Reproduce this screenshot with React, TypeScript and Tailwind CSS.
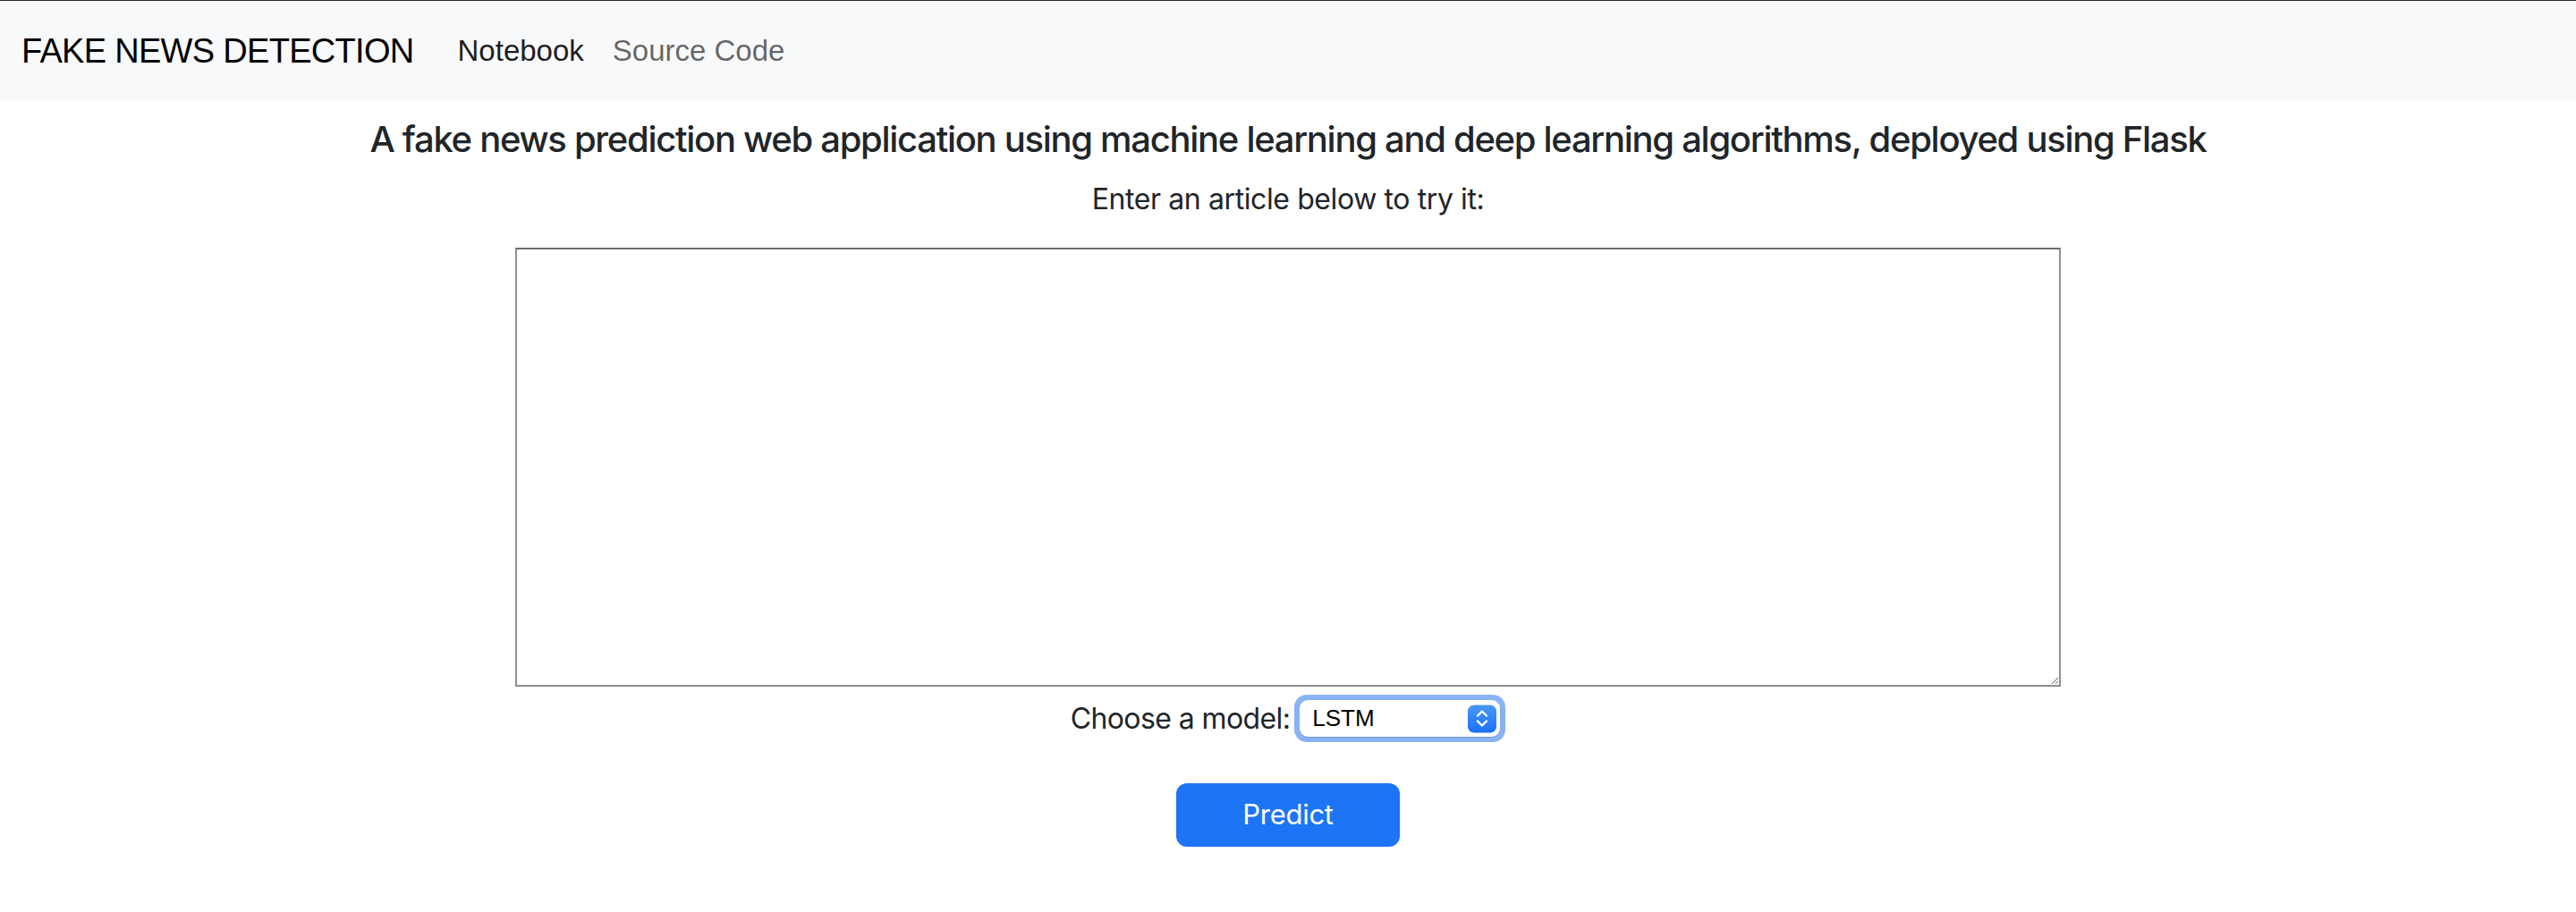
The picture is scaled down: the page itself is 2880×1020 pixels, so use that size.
import { useState } from "react";

const sans = "font-['Inter','Noto_Sans',sans-serif]";

function Stepper() {
  return (
    <span className="absolute right-[10px] top-1/2 -translate-y-1/2 w-[32px] h-[31px] rounded-[7px] bg-gradient-to-b from-[#4a97f8] to-[#1a6ff5] flex items-center justify-center pointer-events-none">
      <svg width="16" height="22" viewBox="0 0 16 22" fill="none" stroke="white" strokeWidth="2.4" strokeLinecap="round" strokeLinejoin="round">
        <path d="M3 8 L8 3 L13 8" />
        <path d="M3 14 L8 19 L13 14" />
      </svg>
    </span>
  );
}

export default function App() {
  const [model, setModel] = useState("LSTM");
  const [text, setText] = useState("");

  return (
    <div className={`min-h-screen bg-white ${sans} text-[#212529]`}>
      {/* navbar */}
      <nav className="h-[112px] bg-[#f8f9fa] border-t border-[#2b2b2b] flex items-center px-[24px] font-['Liberation_Sans',Arial,sans-serif]">
        <a className="text-[38px] leading-[60px] text-black mr-[33px] tracking-[-0.7px]">FAKE NEWS DETECTION</a>
        <a className="px-[16px] text-[33px] leading-[48px] text-black/90">Notebook</a>
        <a className="px-[16px] text-[33px] leading-[48px] text-black/60">Source Code</a>
      </nav>

      <main className="flex flex-col items-center">
        <h5 className="mt-[20px] text-[40px] leading-[48px] font-medium tracking-[-1.3px]">
          A fake news prediction web application using machine learning and deep learning algorithms, deployed using Flask
        </h5>
        <p className="mt-[19px] text-[32px] leading-[48px] tracking-[-0.4px]">Enter an article below to try it:</p>

        <textarea
          value={text}
          onChange={(e) => setText(e.target.value)}
          className="mt-[30px] w-[1728px] h-[491px] border-2 border-[#8f8f8f] border-t-[#6e6e6e] bg-white outline-none p-[4px] text-[26px] resize"
        />

        <div className="mt-[9px] flex items-center">
          <label className="text-[32px] leading-[48px] tracking-[-0.6px] mr-[5px]">Choose a model:</label>
          <div className="relative w-[236px] h-[53px] rounded-[14px] bg-[#89b3f4] p-[6px]">
            <select
              value={model}
              onChange={(e) => setModel(e.target.value)}
              className="appearance-none w-full h-full rounded-[9px] bg-white pl-[14px] text-[26px] text-black font-['Liberation_Sans',Arial,sans-serif] outline-none shadow-[0_1px_1px_rgba(0,0,0,0.15)]"
            >
              <option>LSTM</option>
              <option>Naive Bayes</option>
              <option>Logistic Regression</option>
            </select>
            <Stepper />
          </div>
        </div>

        <button className="mt-[46px] w-[250px] h-[71px] rounded-[12px] bg-[#1d74f5] text-white text-[31px] tracking-[-0.3px]">
          Predict
        </button>
      </main>
    </div>
  );
}
